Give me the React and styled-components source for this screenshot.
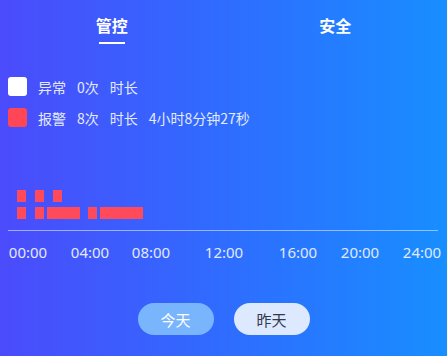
import React from "react";
import styled, { createGlobalStyle } from "styled-components";

const GlobalStyle = createGlobalStyle`
    body {
        margin: 0;
        font-family: "Noto Sans CJK SC", "Noto Sans", sans-serif;
    }
`;

const tabs = [
    { name: "管控", active: true },
    { name: "安全", active: false },
];

const legend = [
    { color: "#ffffff", parts: ["异常", "0次", "时长"] },
    { color: "#ff4656", parts: ["报警", "8次", "时长", "4小时8分钟27秒"] },
];

// bars in pixel space of the chart: [x, width]
const bars = [
    [
        [17, 9],
        [35, 9],
        [53, 9],
    ],
    [
        [17, 9],
        [35, 9],
        [47, 33],
        [88, 9],
        [100, 43],
    ],
];

const ticks = [
    { label: "00:00", gap: 8 },
    { label: "04:00", gap: 22 },
    { label: "08:00", gap: 21 },
    { label: "12:00", gap: 33 },
    { label: "16:00", gap: 34 },
    { label: "20:00", gap: 22 },
    { label: "24:00", gap: 22 },
];

const App = () => {
    return (
        <Page>
            <GlobalStyle />
            <TabBar>
                {tabs.map((t) => (
                    <Tab key={t.name} $active={t.active}>
                        {t.name}
                    </Tab>
                ))}
            </TabBar>
            <Legend>
                {legend.map((row) => (
                    <LegendRow key={row.parts[0]}>
                        <Swatch $color={row.color} />
                        {row.parts.map((p) => (
                            <LegendText key={p}>{p}</LegendText>
                        ))}
                    </LegendRow>
                ))}
            </Legend>
            <Chart width="447" height="44" viewBox="0 0 447 44">
                {bars.map((row, i) =>
                    row.map(([x, w]) => (
                        <rect key={i + "-" + x} x={x} y={i === 0 ? 4 : 21} width={w} height={12} fill="#ff4a5c" />
                    ))
                )}
            </Chart>
            <Axis />
            <Ticks>
                {ticks.map((t) => (
                    <Tick key={t.label} $gap={t.gap}>
                        {t.label}
                    </Tick>
                ))}
            </Ticks>
            <Buttons>
                <DayButton $active>今天</DayButton>
                <DayButton>昨天</DayButton>
            </Buttons>
        </Page>
    );
};

const Page = styled.div`
    width: 447px;
    height: 356px;
    overflow: hidden;
    background: linear-gradient(90deg, #4b4bfb 0%, #2f6cff 50%, #188eff 100%);
    display: flex;
    flex-direction: column;
`;

const TabBar = styled.div`
    display: flex;
    height: 50px;
`;

const Tab = styled.div`
    flex: 1;
    position: relative;
    text-align: center;
    color: #ffffff;
    font-size: 16px;
    font-weight: 700;
    line-height: 20px;
    padding-top: 15px;

    &::after {
        content: "";
        display: ${(p) => (p.$active ? "block" : "none")};
        width: 26px;
        height: 2px;
        background: #ffffff;
        margin: 7px auto 0;
    }
`;

const Legend = styled.div`
    display: flex;
    flex-direction: column;
    gap: 12px;
    padding: 27px 0 0 8px;
`;

const LegendRow = styled.div`
    display: flex;
    align-items: center;
    height: 19px;
`;

const Swatch = styled.div`
    width: 19px;
    height: 19px;
    border-radius: 3px;
    background: ${(p) => p.$color};
    margin-right: 11px;
`;

const LegendText = styled.span`
    color: #e4ebff;
    font-size: 14px;
    margin-right: 11px;
`;

const Chart = styled.svg`
    display: block;
    margin-top: 59px;
`;

const Axis = styled.div`
    height: 1px;
    margin: 0 9px 0 8px;
    background: rgba(220, 235, 255, 0.6);
`;

const Ticks = styled.div`
    display: flex;
    margin-top: 13px;
`;

const Tick = styled.span`
    margin-left: ${(p) => p.$gap}px;
    color: #e0e9ff;
    font-family: "Noto Sans", sans-serif;
    font-size: 15px;
    line-height: 16px;
    width: 40px;
    text-align: center;
    white-space: nowrap;
`;

const Buttons = styled.div`
    display: flex;
    justify-content: center;
    gap: 20px;
    margin-top: 43px;
`;

const DayButton = styled.div`
    width: 76px;
    height: 32px;
    border-radius: 16px;
    display: flex;
    align-items: center;
    justify-content: center;
    font-size: 15px;
    background: ${(p) => (p.$active ? "#79b5fc" : "#dde9ff")};
    color: ${(p) => (p.$active ? "#ffffff" : "#333a4a")};
`;

export default App;
